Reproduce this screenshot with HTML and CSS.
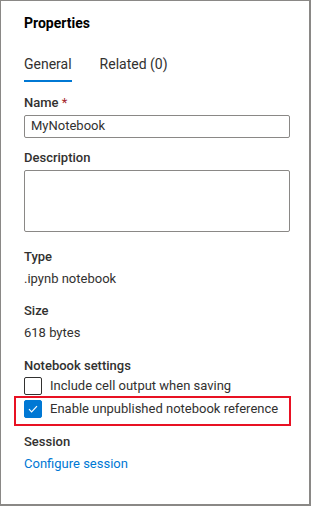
FILE: index.html
```html
<!DOCTYPE html>
<html lang="en">
<head>
    <meta charset="UTF-8">
    <meta name="viewport" content="width=device-width, initial-scale=1.0">
    <title>Properties</title>
    <link rel="stylesheet" href="styles.css">
</head>
<body>

    <!-- Properties Panel -->
    <div class="panel">
        <div class="panel-title">Properties</div>

        <div class="tabs">
            <div class="tab active">General</div>
            <div class="tab">Related (0)</div>
        </div>

        <div class="field">
            <div class="label">Name <span class="required">*</span></div>
            <div class="text-input">MyNotebook</div>
        </div>

        <div class="field">
            <div class="label">Description</div>
            <div class="text-area"></div>
        </div>

        <div class="info">
            <div class="label">Type</div>
            <div class="value">.ipynb notebook</div>
        </div>

        <div class="info">
            <div class="label">Size</div>
            <div class="value">618 bytes</div>
        </div>

        <div class="settings">
            <div class="label">Notebook settings</div>
            <div class="check-row">
                <span class="checkbox"></span>
                <span>Include cell output when saving</span>
            </div>
            <div class="check-row highlighted">
                <span class="checkbox checked">
                    <svg width="18" height="18" viewBox="0 0 18 18">
                        <path d="M5 9.2 L7.6 11.8 L13 6.2" fill="none" stroke="#fff" stroke-width="1.2"/>
                    </svg>
                </span>
                <span>Enable unpublished notebook reference</span>
            </div>
        </div>

        <div class="info session">
            <div class="label">Session</div>
            <a class="link" href="#">Configure session</a>
        </div>
    </div>

</body>
</html>
```

FILE: styles.css
```css
body {
    margin: 0;
    font-family: 'Roboto', 'Noto Sans', sans-serif;
    font-size: 13px;
    line-height: 20px;
    color: #323130;
    background: #fff;
}

/* Outer panel frame */
.panel {
    width: 311px;
    height: 506px;
    box-sizing: border-box;
    border: 1px solid #8a8886;
    border-right-width: 2px;
    border-bottom-width: 2px;
    padding: 12px 19px 0 23px;
}

.panel-title {
    font-size: 14px;
    font-weight: bold;
    color: #000;
}

/* Tabs */
.tabs {
    display: flex;
    gap: 28px;
    margin-top: 21px;
}

.tab {
    padding-bottom: 6px;
    border-bottom: 2px solid transparent;
    font-size: 14px;
}

.tab.active {
    border-bottom-color: #0078d4;
}

/* Form fields */
.label {
    font-weight: 500;
}

.required {
    color: #a4262c;
    font-weight: normal;
}

.field {
    margin-top: 11px;
}

.field + .field {
    margin-top: 10px;
}

.text-input {
    margin-top: 2px;
    height: 23px;
    box-sizing: border-box;
    border: 1px solid #8a8886;
    border-radius: 2px;
    padding: 0 6px;
    line-height: 20px;
}

.text-area {
    margin-top: 2px;
    height: 62px;
    box-sizing: border-box;
    border: 1px solid #8a8886;
    border-radius: 2px;
}

.info {
    margin-top: 15px;
}

.info + .info {
    margin-top: 12px;
}

.value {
    margin-top: 2px;
}

/* Notebook settings */
.settings {
    margin-top: 13px;
}

.check-row {
    display: flex;
    align-items: flex-start;
    gap: 8px;
    height: 20px;
    margin-top: 1px;
    white-space: nowrap;
}

.check-row span:last-child {
    line-height: 17px;
}

.checkbox {
    width: 18px;
    height: 18px;
    box-sizing: border-box;
    border: 1px solid #323130;
    border-radius: 2px;
    flex-shrink: 0;
}

.checkbox.checked {
    background: #0078d4;
    border-color: #0078d4;
}

.checkbox svg {
    display: block;
    margin: -1px;
}

.highlighted {
    margin-left: -10px;
    padding: 2px 8px 4px;
    border: 2px solid #e81123;
    margin-top: -1px;
    margin-right: -1px;
}

.session {
    margin-top: 6px;
}

.link {
    display: block;
    margin-top: 2px;
    color: #0078d4;
    text-decoration: none;
}
```
